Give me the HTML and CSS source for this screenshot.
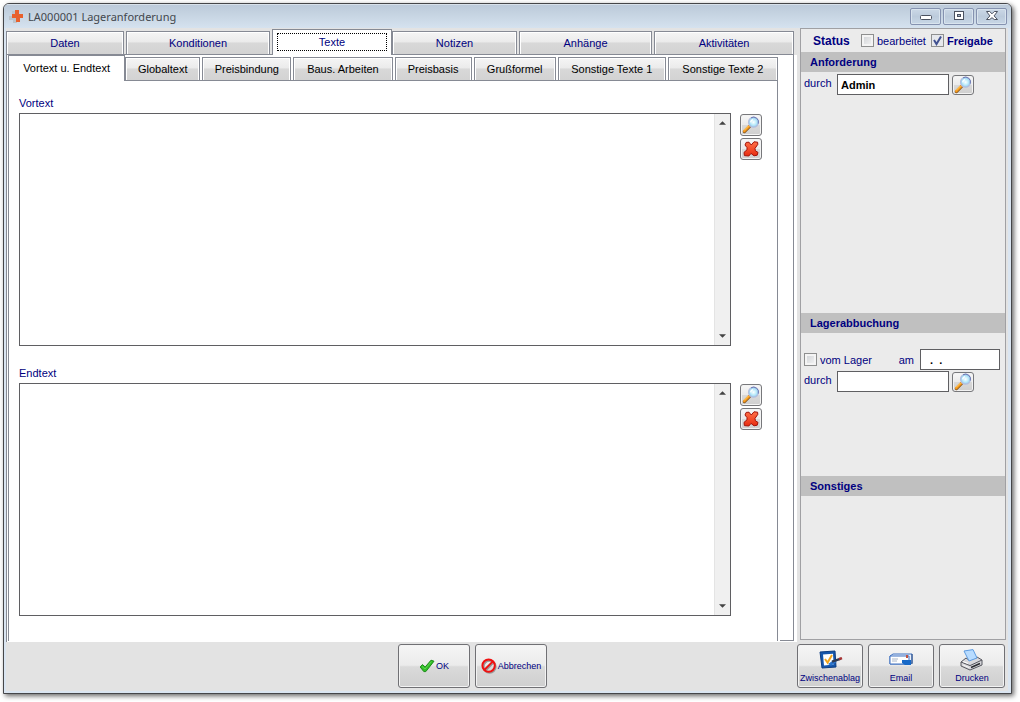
FILE: index.html
```html
<!DOCTYPE html>
<html lang="de">
<head>
<meta charset="utf-8">
<title>LA000001 Lageranforderung</title>
<link rel="stylesheet" href="styles.css">
</head>
<body>
<svg class="defs" aria-hidden="true">
  <defs>
    <radialGradient id="lens"><stop offset="0" stop-color="#ffffff"/><stop offset=".5" stop-color="#c4eefb"/><stop offset="1" stop-color="#8fcdf0"/></radialGradient>
    <linearGradient id="cross-fill" x2="0" y2="1"><stop offset="0" stop-color="#ff7048"/><stop offset="1" stop-color="#e82c10"/></linearGradient>
    <symbol id="magnifier" viewBox="0 0 18 18">
      <path d="M2.4 15.6L7.6 10.4" stroke="#8a5a20" stroke-width="3.2" stroke-linecap="round"/>
      <path d="M2.2 15.2L7.2 10.2" stroke="#f79a1c" stroke-width="2.4" stroke-linecap="round"/>
      <path d="M2 14.4L6.6 9.8" stroke="#ffd77a" stroke-width="1"/>
      <circle cx="11.5" cy="6.2" r="5" fill="url(#lens)" stroke="#b4bede" stroke-width="1.2"/>
      <path d="M9 1.8A5 5 0 0 1 16.3 7.6" fill="none" stroke="#6a78b4" stroke-width="1"/>
      <path d="M8.6 6.4Q9 4 11 3.6" fill="none" stroke="#fff" stroke-width="1.4"/>
    </symbol>
    <symbol id="cross" viewBox="0 0 18 18">
      <path d="M4.2 2.4L7 2.2L9.2 5L12 1.800L15.600 2.200L15.800 4.400L13 8.400L13.400 10.800L16 12.400L15.200 15.200L12 15.800L9 13.400L6.800 16L2.400 15.600L2 12.400L5 9.800L5 7.600L3 5Z" fill="url(#cross-fill)" stroke="#a31208" stroke-width="1" stroke-linejoin="round"/>
    </symbol>
  </defs>
</svg>

<div class="window">
  <header class="titlebar">
    <svg class="app-icon" viewBox="0 0 15 15"><path d="M3 2h4v4h3v4H8v4H4v-3H0V7h3z" fill="#bcc3ca"/><path d="M6 1h4v4h4v4h-3v4H7V9H3V5h3z" fill="#e8602c"/></svg>
    <h1 class="title">LA000001 Lageranforderung</h1>
    <div class="window-controls">
      <button class="win-btn" aria-label="Minimieren"><svg viewBox="0 0 14 12"><rect x="1.5" y="5.5" width="11" height="4" rx="1" fill="#fff" stroke="#4b5260"/></svg></button>
      <button class="win-btn" aria-label="Maximieren"><svg viewBox="0 0 14 12"><rect x="2.5" y="1.5" width="9" height="8" fill="#fff" stroke="#4b5260"/><rect x="5.5" y="4.5" width="3" height="2" fill="#a5b5c8" stroke="#4b5260"/></svg></button>
      <button class="win-btn" aria-label="Schließen"><svg viewBox="0 0 14 12"><path d="M1.500 1.500h3.200L7 3.800l2.300-2.300h3.200L9.100 5.900l3.400 3.600H9.300L7 7.700 4.700 9.500H1.500l3.400-3.600z" fill="#fff" stroke="#4b5260" stroke-linejoin="round"/></svg></button>
    </div>
  </header>

  <div class="client">
    <div class="body">
      <main class="notebook">
        <div class="tabs main-tabs" role="tablist">
          <button class="tab" role="tab">Daten</button>
          <button class="tab" role="tab">Konditionen</button>
          <button class="tab active" role="tab" aria-selected="true"><span class="focus">Texte</span></button>
          <button class="tab" role="tab">Notizen</button>
          <button class="tab" role="tab">Anhänge</button>
          <button class="tab" role="tab">Aktivitäten</button>
        </div>
        <div class="page">
          <div class="inner">
            <div class="tabs sub-tabs" role="tablist">
              <button class="tab active" role="tab" aria-selected="true">Vortext u. Endtext</button>
              <button class="tab" role="tab">Globaltext</button>
              <button class="tab" role="tab">Preisbindung</button>
              <button class="tab" role="tab">Baus. Arbeiten</button>
              <button class="tab" role="tab">Preisbasis</button>
              <button class="tab" role="tab">Grußformel</button>
              <button class="tab" role="tab">Sonstige Texte 1</button>
              <button class="tab" role="tab">Sonstige Texte 2</button>
            </div>
            <div class="texts">
              <section class="text-block">
                <label for="vortext">Vortext</label>
                <div class="text-row">
                  <div class="memo">
                    <textarea id="vortext"></textarea>
                    <div class="scroll"><svg viewBox="0 0 8 4"><path d="M0 4L4 0l4 4z" fill="#444"/></svg><svg viewBox="0 0 8 4"><path d="M0 0h8L4 4z" fill="#444"/></svg></div>
                  </div>
                  <div class="tools">
                    <button class="icon-btn" aria-label="Vortext suchen"><svg><use href="#magnifier"/></svg></button>
                    <button class="icon-btn" aria-label="Vortext löschen"><svg><use href="#cross"/></svg></button>
                  </div>
                </div>
              </section>
              <section class="text-block">
                <label for="endtext">Endtext</label>
                <div class="text-row">
                  <div class="memo">
                    <textarea id="endtext"></textarea>
                    <div class="scroll"><svg viewBox="0 0 8 4"><path d="M0 4L4 0l4 4z" fill="#444"/></svg><svg viewBox="0 0 8 4"><path d="M0 0h8L4 4z" fill="#444"/></svg></div>
                  </div>
                  <div class="tools">
                    <button class="icon-btn" aria-label="Endtext suchen"><svg><use href="#magnifier"/></svg></button>
                    <button class="icon-btn" aria-label="Endtext löschen"><svg><use href="#cross"/></svg></button>
                  </div>
                </div>
              </section>
            </div>
          </div>
        </div>
      </main>

      <aside class="side">
        <div class="status">
          <strong class="status-title">Status</strong>
          <label class="check"><input type="checkbox">bearbeitet</label>
          <label class="check bold"><input type="checkbox" checked>Freigabe</label>
        </div>
        <section>
          <h2>Anforderung</h2>
          <div class="row first">
            <label class="row-label" for="req-by">durch</label>
            <input class="field" id="req-by" type="text" value="Admin">
            <button class="icon-btn low" aria-label="Person suchen"><svg><use href="#magnifier"/></svg></button>
          </div>
        </section>
        <section>
          <h2>Lagerabbuchung</h2>
          <div class="row date-row">
            <label class="check"><input type="checkbox">vom Lager</label>
            <label class="am" for="date">am</label>
            <input class="field date" id="date" type="text" value="&nbsp;.&nbsp;&nbsp;.">
          </div>
          <div class="row">
            <label class="row-label" for="out-by">durch</label>
            <input class="field" id="out-by" type="text">
            <button class="icon-btn low" aria-label="Person suchen"><svg><use href="#magnifier"/></svg></button>
          </div>
        </section>
        <section>
          <h2>Sonstiges</h2>
        </section>
      </aside>
    </div>

    <footer class="footer">
      <div class="actions">
        <button class="big-btn"><svg class="ok" viewBox="0 0 16 14"><path d="M1.200 8L3.400 5.600L6.200 8L12 1.200L15 2.200L6.800 12.600L4.800 12.600Z" fill="#2fbf25" stroke="#1d8a1a" stroke-linejoin="round"/><path d="M3 7.400l3 2.600 6.400-7.400" fill="none" stroke="#5fd450"/></svg>OK</button>
        <button class="big-btn"><svg class="forbid" viewBox="0 0 16 16"><g fill="none" stroke="#999" stroke-width="2"><circle cx="8.600" cy="8.800" r="6"/><path d="M4.600 12.600l8-8"/></g><g fill="none" stroke="#f01010" stroke-width="2"><circle cx="7.600" cy="7.600" r="6.200"/><path d="M3.600 11.600l8-8"/></g></svg>Abbrechen</button>
      </div>
      <div class="outputs">
        <button class="big-btn stacked">
          <svg viewBox="0 0 26 22"><path d="M3 3l15-1 1 16-14 1z" fill="#1556ab" stroke="#0d3c80" stroke-linejoin="round"/><path d="M6 5.400l10-.6.6 10.800-9.600.8z" fill="#fff"/><path d="M8 10l2.600 3.600L15 6" fill="none" stroke="#f1a51c" stroke-width="2"/><path d="M11 15l5-3.600 4 1.400-6 4z" fill="#2b74cc"/><path d="M15 12.600l9-3" stroke="#303a50" stroke-width="2.400"/><path d="M22 10.200l3-1" stroke="#a33" stroke-width="2.400"/></svg>
          <span>Zwischenablag</span></button>
        <button class="big-btn stacked">
          <svg viewBox="0 0 26 22"><path d="M2 7l3-2h19v9l-2 1H2z" fill="#e8f0fc" stroke="#3f71c0"/><path d="M2 7h19v8H2z" fill="#fff" stroke="#3f71c0"/><path d="M4 10h6M4 12h5" stroke="#aab6c8"/><path d="M14 11h9v5h-6l-3-2z" fill="#1769c8"/><path d="M18 6h2v3h-2z" fill="#c05040"/><path d="M24 5v10" stroke="#27497f"/></svg>
          <span>Email</span></button>
        <button class="big-btn stacked">
          <svg viewBox="0 0 26 22"><path d="M2 13l5-4 3 2 8-3 5 3v5l-12 5-9-4z" fill="#d8d8dc" stroke="#55565e" stroke-linejoin="round"/><path d="M5 2l9-1.400 4 8.400-8 3z" fill="#b8dcff" stroke="#5d9be0"/><path d="M2 13l9 3.600L23 11" fill="none" stroke="#55565e"/><path d="M4 12.600l5 1.800" fill="none" stroke="#fff"/><path d="M12 18.400l9-3.800" stroke="#2a2b30" stroke-width="1.600"/><path d="M4 16l6 2.600" stroke="#f5f5f5"/></svg>
          <span>Drucken</span></button>
      </div>
    </footer>
  </div>
</div>
</body>
</html>
```
FILE: styles.css
```css
* { box-sizing: border-box; }

body {
  margin: 0;
  height: 100vh;
  padding: 3px 8px 8px 3px;
  background: #fff;
  color: #000080;
  font: 11px/14px "Liberation Sans", Arial, sans-serif;
}

button, input, textarea { font: inherit; color: inherit; margin: 0; }
button { padding: 0; }
svg { display: block; flex: none; fill: none; }
.defs { position: absolute; width: 0; height: 0; }

.window {
  height: 100%;
  display: flex;
  flex-direction: column;
  border: 1px solid #454649;
  border-radius: 6px 6px 0 0;
  background: #dae5f1;
  box-shadow: 2px 2px 5px rgba(0, 0, 0, .6);
}

.titlebar {
  flex: none;
  height: 24px;
  display: flex;
  align-items: center;
  padding: 0 4px 0 5px;
  border-radius: 5px 5px 0 0;
  background: linear-gradient(#f4f8fb 0, #bccada 1px, #c5d3e1 40%, #d5e2ef);
}
.app-icon { width: 15px; height: 15px; }
.title {
  margin: 0 auto 0 4px;
  padding-top: 1px;
  color: #43474d;
  font: 11px/18px "Noto Sans", "Open Sans", sans-serif;
}
.window-controls { display: flex; gap: 2px; }
.win-btn {
  width: 31px;
  height: 17px;
  display: grid;
  place-items: center;
  border: 1px solid #8592b0;
  border-radius: 2px;
  background: linear-gradient(#cbd8e6, #bccbdc 50%, #c8d7e6);
  box-shadow: inset 0 0 0 1px #d9e4ee;
}
.win-btn svg { width: 14px; height: 12px; }

.client {
  flex: 1;
  min-height: 0;
  display: flex;
  flex-direction: column;
  margin: 0 3px 2px 2px;
  background: #e3e3e3;
}
.body {
  flex: 1;
  min-height: 0;
  display: grid;
  grid-template-columns: minmax(0, 1fr) 206px;
  gap: 3px;
  padding-right: 2px;
}

.notebook { display: flex; flex-direction: column; min-height: 0; }
.tabs { display: grid; align-items: end; box-shadow: inset 0 -1px #868a94; }
.main-tabs {
  height: 27px;
  margin-right: 3px;
  grid-template-columns: 120fr 146fr 120fr 127fr 135fr 140fr;
}
.sub-tabs {
  height: 26px;
  color: #000;
  grid-template-columns: 117fr 77fr 91fr 101fr 79fr 84fr 110fr 110fr;
}
.tab {
  height: 24px;
  margin-right: 2px;
  border: 1px solid #868a94;
  background: linear-gradient(#f5f5f5, #ebebeb 45%, #d8d8d8 50%, #d3d3d3);
  box-shadow: inset 1px 1px #fff, inset -1px 0 #fff;
  white-space: nowrap;
}
.tab:last-child { margin-right: 0; }
.tab.active {
  height: 26px;
  margin-right: 0;
  border-bottom: 0;
  background: #fff;
}
.sub-tabs .tab.active { padding-bottom: 2px; }
.focus {
  display: block;
  margin: 0 4px 2px;
  padding: 1px 0;
  border: 1px dotted #000;
}

.page {
  flex: 1;
  min-height: 0;
  display: flex;
  padding: 0 19px 1px 2px;
  background: linear-gradient(#868a94, #868a94) 0 0 / 1px 100% no-repeat,
    linear-gradient(#868a94, #868a94) right 3px top 0 / 1px calc(100% - 1px) no-repeat,
    linear-gradient(#868a94, #868a94) right 3px bottom 1px / 14px 1px no-repeat,
    #fff;
}
.inner {
  flex: 1;
  min-width: 0;
  display: flex;
  flex-direction: column;
}
.texts {
  flex: 1;
  min-height: 0;
  display: flex;
  flex-direction: column;
  gap: 20px;
  padding: 15px 15px 25px 10px;
  border: 1px solid #868a94;
  border-width: 0 1px;
}
.text-block {
  flex: 1;
  min-height: 0;
  display: flex;
  flex-direction: column;
  gap: 3px;
}
.text-row { flex: 1; min-height: 0; display: flex; gap: 9px; }
.memo { flex: 1; min-width: 0; display: flex; border: 1px solid #5f5f62; background: #fff; }
.memo textarea {
  flex: 1;
  min-width: 0;
  border: 0;
  padding: 2px;
  resize: none;
  outline: 0;
  overflow: hidden;
  background: none;
  color: #000;
}
.scroll {
  width: 16px;
  display: flex;
  flex-direction: column;
  align-items: center;
  justify-content: space-between;
  padding: 7px 0;
  border-left: 1px solid #e4e4e4;
  background: #f0f0f0;
}
.scroll svg { width: 7px; height: 4px; }
.tools { display: flex; flex-direction: column; gap: 2px; padding-top: 1px; }
.icon-btn {
  flex: none;
  width: 22px;
  height: 22px;
  display: grid;
  place-items: center;
  border: 1px solid #77787b;
  border-radius: 3px;
  background: linear-gradient(#f7f7f7, #ebebeb 48%, #d9d9d9 52%, #cfcfcf);
  box-shadow: inset 0 0 0 1px #f3f3f3;
}
.icon-btn svg { width: 18px; height: 18px; }
.icon-btn.low { height: 20px; }

.side {
  min-height: 0;
  display: grid;
  grid-template-rows: 23px 261fr 163fr 163fr;
  margin-bottom: 2px;
  border: 1px solid #a0a0a3;
  background: #ebebeb;
}
.side h2 {
  margin: 0;
  padding: 3px 9px;
  background: #c0c0c0;
  font: bold 11px/14px "Liberation Sans", Arial, sans-serif;
}
.status { display: flex; align-items: center; padding-left: 12px; }
.status-title { width: 48px; font-size: 12px; }
.check { display: flex; align-items: center; gap: 3px; margin-right: 5px; white-space: nowrap; }
.check.bold { font-weight: bold; margin-right: 0; }
.check input {
  appearance: none;
  width: 13px;
  height: 13px;
  border: 1px solid #8e8f8f;
  background: linear-gradient(135deg, #cdd0d4, #f6f6f6);
  box-shadow: inset 0 0 0 2px #f4f4f4;
}
.check input:checked {
  background: url("data:image/svg+xml,%3Csvg xmlns='http://www.w3.org/2000/svg' viewBox='0 0 11 11'%3E%3Cpath d='M2 5L4.500 9L9 1.500' fill='none' stroke='%23405090' stroke-width='2'/%3E%3C/svg%3E") #e6e8ec;
  box-shadow: none;
}
.row { display: flex; align-items: center; padding: 1px 5px 0 3px; }
.row.first { padding-top: 2px; }
.row-label { width: 33px; padding-bottom: 3px; }
.field {
  width: 112px;
  height: 21px;
  margin-right: 3px;
  padding: 0 3px;
  border: 1px solid #5f5f62;
  border-radius: 0;
  background: #fff;
  color: #000;
  font-weight: bold;
}
.date-row { padding-top: 16px; }
.am { margin-left: auto; padding-right: 6px; }
.field.date { width: 80px; margin: 0; padding-left: 6px; }

.footer {
  flex: none;
  display: grid;
  grid-template-columns: 392fr auto 250fr auto;
  padding: 2px 3px 3px 0;
}
.actions { grid-column: 2; display: flex; gap: 5px; }
.outputs { grid-column: 4; display: flex; gap: 5px; }
.big-btn {
  width: 72px;
  height: 44px;
  display: flex;
  align-items: center;
  justify-content: center;
  gap: 1px;
  border: 1px solid #707074;
  border-radius: 3px;
  background: linear-gradient(#f5f5f5, #ebebeb 48%, #dadada 52%, #cfcfcf);
  box-shadow: inset 0 0 0 1px #f3f3f3;
  font-size: 9px;
}
.big-btn .ok { width: 16px; height: 14px; }
.big-btn .forbid { width: 16px; height: 16px; }
.big-btn.stacked { width: 66px; flex-direction: column; gap: 0; padding-top: 2px; }
.big-btn.stacked svg { width: 26px; height: 22px; }
```
